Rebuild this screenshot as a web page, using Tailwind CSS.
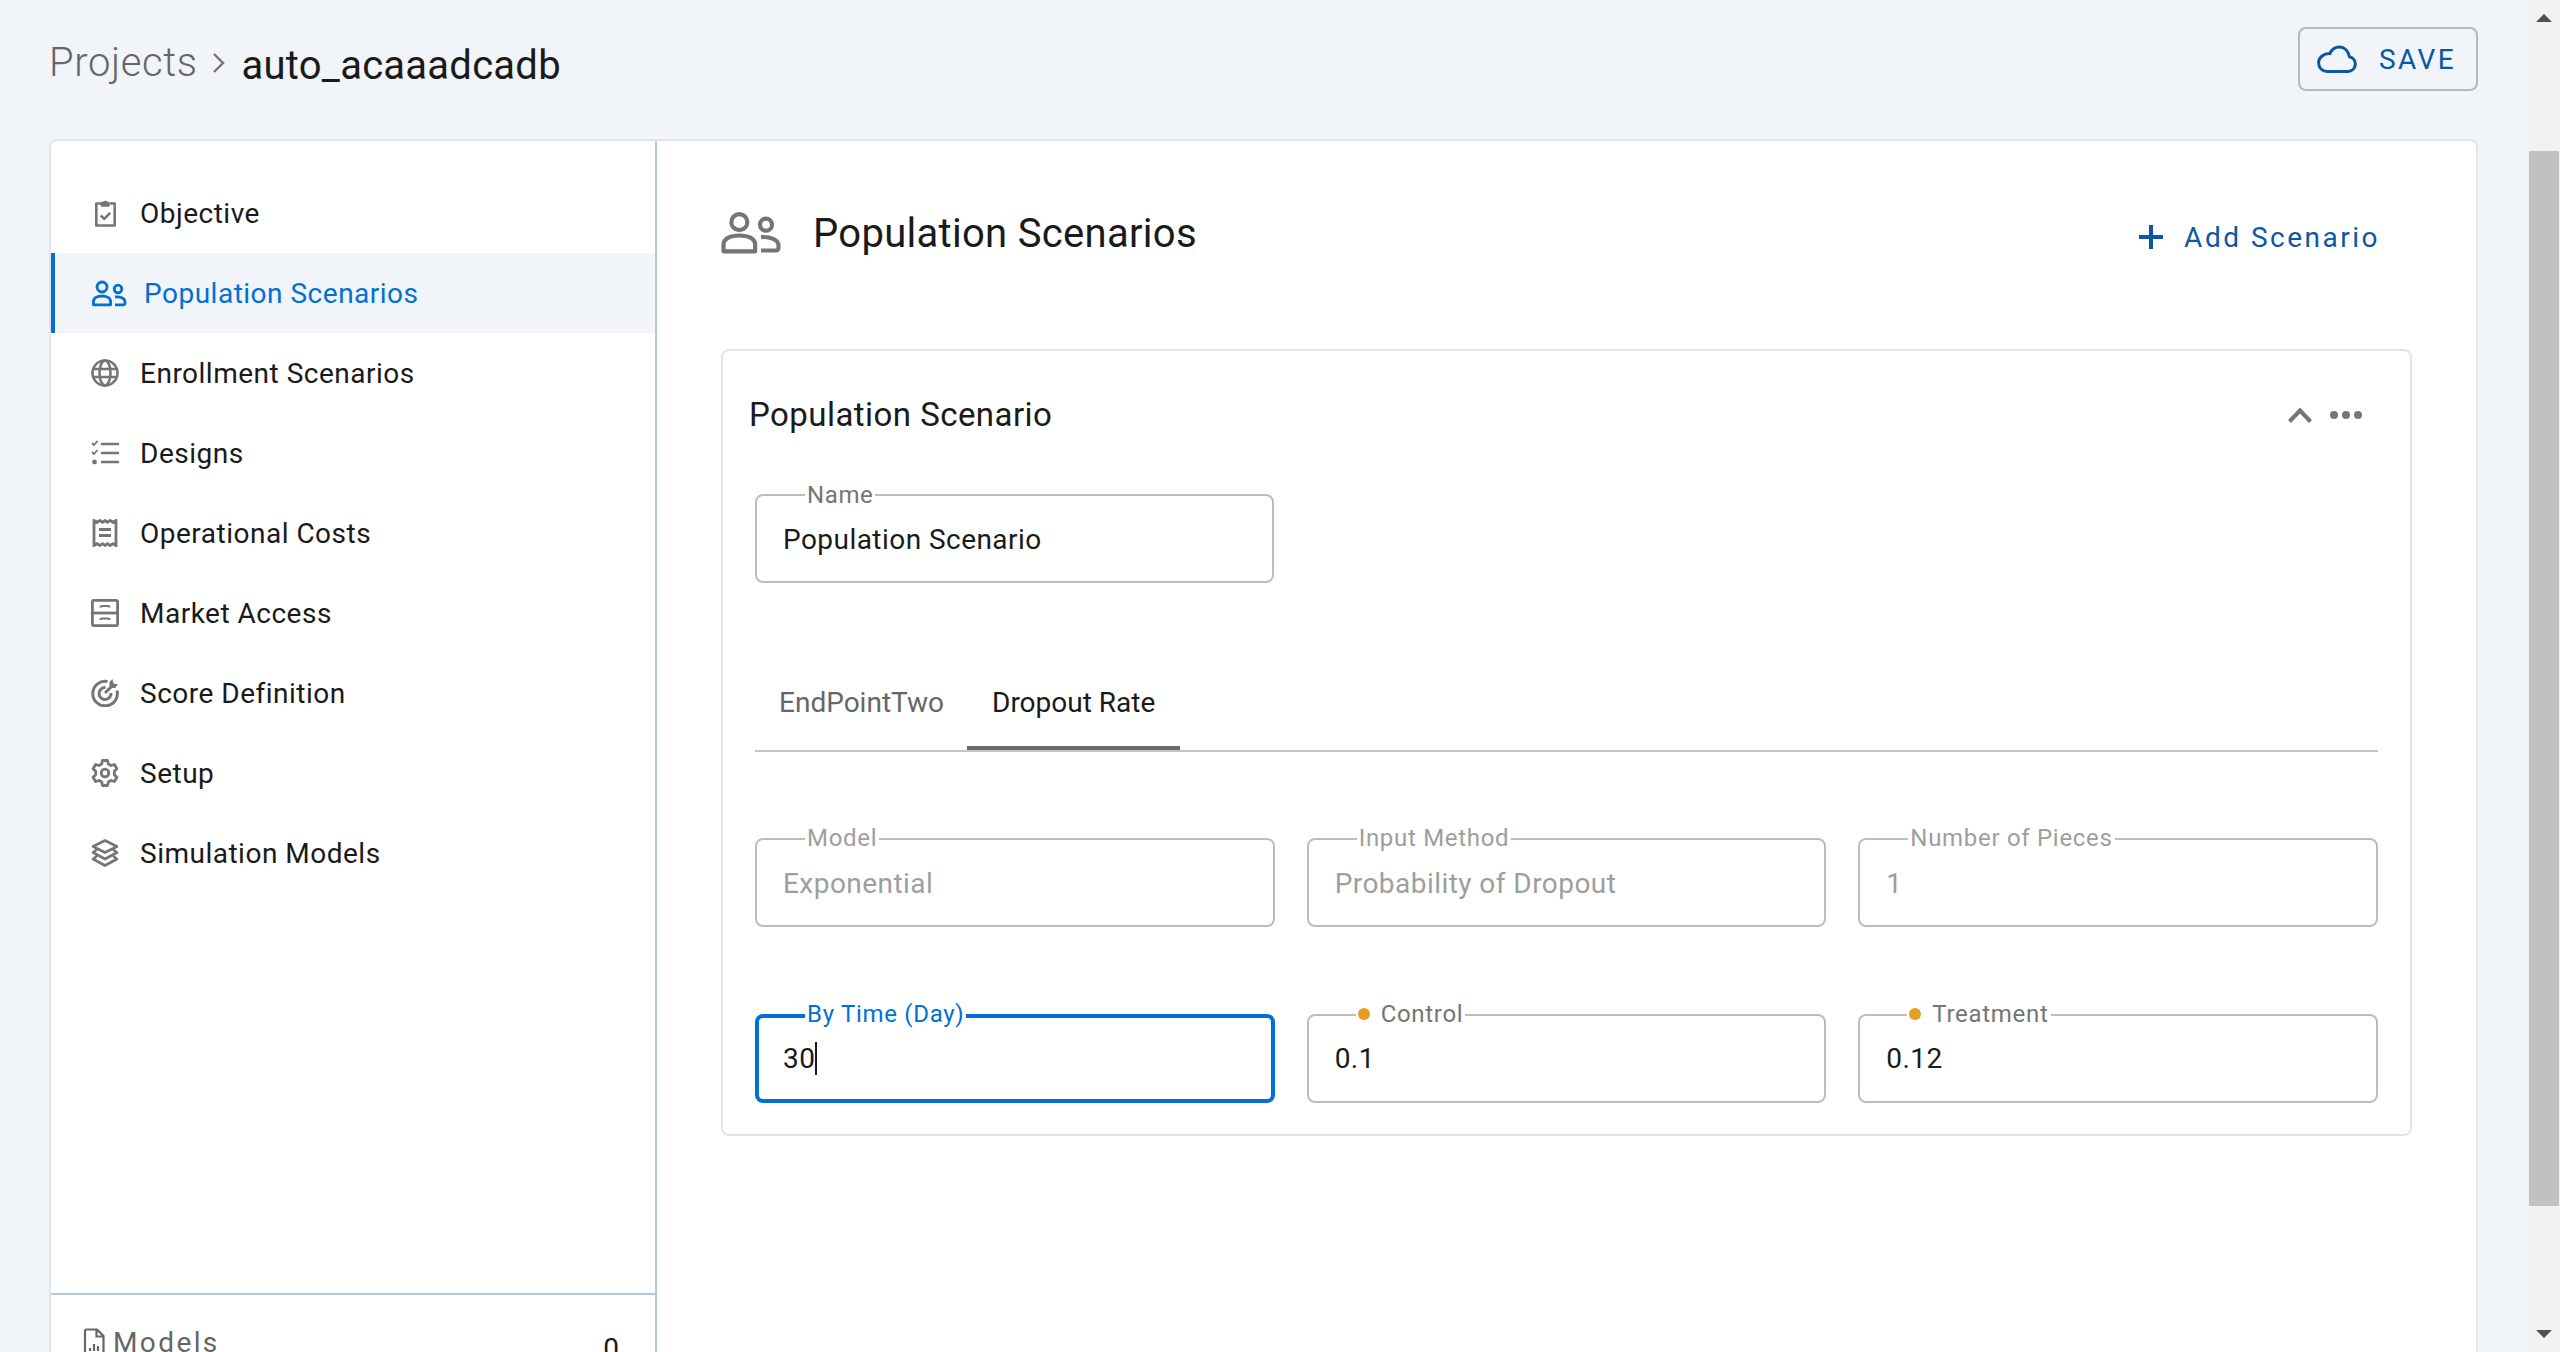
<!DOCTYPE html>
<html lang="en">
<head>
  <meta charset="UTF-8" />
  <title>Population Scenarios</title>
  <script src="https://cdn.jsdelivr.net/npm/@tailwindcss/browser@4"></script>
</head>
<body class="h-[1352px] overflow-hidden flex bg-[#f1f4f8] font-['Roboto',sans-serif] text-[#1a1a1a]">

  <div class="flex-1 min-w-0 pl-[49px] pr-[49px]">
    <!-- header -->
    <header class="h-[139px] flex items-start justify-between">
      <div class="flex items-center h-[70px] mt-[27px]">
        <span class="text-[40px] pt-[2px] font-light text-[#666666] tracking-[0.6px]">Projects</span>
        <svg class="w-[14px] h-[22px] ml-[14px] mr-[16px] mt-[2px]" viewBox="0 0 14 22" fill="none" stroke="#757575" stroke-width="2.4"><path d="M2 2l9 9-9 9"/></svg>
        <span class="text-[40px] mt-[8px] tracking-[0.25px]">auto_acaaadcadb</span>
      </div>
      <button class="mt-[27px] w-[180px] h-[64px] border-2 border-[#b5b9bd] rounded-lg flex items-center pl-[17px] text-[#0b57a4]">
        <svg class="w-[40px] h-[28px]" viewBox="0 0 40 28" fill="none" stroke="#0b57a4" stroke-width="3"><path d="M10 26.500h21a7.500 7.500 0 0 0 1.500-14.800C31.500 6 27.500 2 22.500 2c-4.600 0-8 2.600-9.600 6.600C7 8.400 1.600 12.200 1.600 17.800c0 5 3.800 8.700 8.400 8.700z"/></svg>
        <span class="ml-[22px] pt-[2px] text-[28px] tracking-[2.4px]">SAVE</span>
      </button>
    </header>

    <!-- main card -->
    <div class="flex h-[1400px] bg-white border-2 border-[#e4e4e4] rounded-lg">
      <aside class="w-[606px] shrink-0 border-r-2 border-[#b0c8e0]">
        <nav class="h-[1152px] pt-[32px] text-[28px] tracking-[0.5px]">
          <a class="h-[80px] flex items-center pl-[40px] pt-[2px]">
            <svg class="w-[28px] h-[28px] mr-[21px] -mt-[2px] text-[#757575]" viewBox="0 0 28 28" fill="none" stroke="currentColor" stroke-width="2.600" stroke-linejoin="round"><path d="M10 4.500H5.300v22h18.400v-22H19"/><path d="M10.500 3.500h2a2 2 0 0 1 3.500 0h2v3.500h-7.500z" fill="currentColor" stroke-width="1.400"/><path d="M9.800 16.500l3.400 3.400 6-6"/></svg>
            Objective
          </a>
          <a class="h-[80px] flex items-center pl-[36px] pt-[2px] bg-[#f1f4f8] border-l-4 border-[#0070d6] text-[#0070d6]">
            <svg class="w-[36px] h-[28px] mr-[17px] -mt-[2px]" viewBox="0 0 36 28" fill="none" stroke="currentColor" stroke-width="2.800" stroke-linejoin="round"><circle cx="11" cy="8" r="5"/><circle cx="27" cy="10" r="3.800"/><path d="M2.400 25.800v-3c0-3.800 4-5.800 8.600-5.800s8.600 2 8.600 5.800v3z"/><path d="M24 18c5-.5 10 1 10 5v1.300a1.500 1.500 0 0 1-1.500 1.500H24"/></svg>
            Population Scenarios
          </a>
          <a class="h-[80px] flex items-center pl-[40px] pt-[2px]">
            <svg class="w-[28px] h-[28px] mr-[21px] -mt-[2px] text-[#757575]" viewBox="0 0 28 28" fill="none" stroke="currentColor" stroke-width="2.600"><circle cx="14" cy="14" r="12.500"/><ellipse cx="14" cy="14" rx="5.500" ry="12.500"/><path d="M2 10h24M2 18h24"/></svg>
            Enrollment Scenarios
          </a>
          <a class="h-[80px] flex items-center pl-[40px] pt-[2px]">
            <svg class="w-[28px] h-[28px] mr-[21px] -mt-[2px] text-[#757575]" viewBox="0 0 28 28" fill="none" stroke="currentColor" stroke-width="2.600"><path d="M10 5h18M10 14h18M10 23h18"/><path d="M1 4l2 2 3.500-4M1 13l2 2 3.500-4" stroke-width="1.800"/><circle cx="3.500" cy="23" r="2.400" fill="currentColor" stroke="none"/></svg>
            Designs
          </a>
          <a class="h-[80px] flex items-center pl-[40px] pt-[2px]">
            <svg class="w-[28px] h-[28px] mr-[21px] -mt-[2px] text-[#757575]" viewBox="0 0 28 28" fill="none" stroke="currentColor" stroke-width="2.800"><path d="M3 1.500v25l3-1.800 3 1.800 2.500-1.800L14 26.500l2.500-1.800 2.500 1.800 3-1.800 3 1.800v-25l-3 1.800-3-1.800-2.500 1.800L14 1.500l-2.500 1.800L9 1.500 6 3.300z"/><path d="M8 10.500h12M8 16.500h12"/></svg>
            Operational Costs
          </a>
          <a class="h-[80px] flex items-center pl-[40px] pt-[2px]">
            <svg class="w-[28px] h-[28px] mr-[21px] -mt-[2px] text-[#757575]" viewBox="0 0 28 28" fill="none" stroke="currentColor" stroke-width="2.800"><rect x="1.400" y="1.400" width="25.200" height="25.200" rx="1.500"/><path d="M1 14h26"/><path d="M9.500 8.500c0-1 .5-1.500 1.500-1.500h6c1 0 1.500.5 1.500 1.500M9.500 21c0-1 .5-1.500 1.500-1.500h6c1 0 1.500.5 1.500 1.500" stroke-width="2.200"/></svg>
            Market Access
          </a>
          <a class="h-[80px] flex items-center pl-[40px] pt-[2px]">
            <svg class="w-[28px] h-[28px] mr-[21px] -mt-[2px] text-[#757575]" viewBox="0 0 28 28" fill="none" stroke="currentColor" stroke-width="3"><path d="M16.500 2.500A12.300 12.300 0 1 0 26 11.500"/><path d="M14.500 8.500A6 6 0 1 0 20 14"/><path d="M14 14l7-7"/><path d="M18.500 7.500V3l3-3 1 4.500 4.500 1-3 3.500h-4z" fill="currentColor" stroke="none"/></svg>
            Score Definition
          </a>
          <a class="h-[80px] flex items-center pl-[40px] pt-[2px]">
            <svg class="w-[28px] h-[28px] mr-[21px] -mt-[2px] text-[#757575]" viewBox="0 0 28 28" fill="none" stroke="currentColor" stroke-width="2.800" stroke-linejoin="round"><path d="M11.500 1.500h5l.8 3.500 2.700 1.500 3.400-1 2.500 4.300-2.600 2.500v3.400l2.600 2.500-2.500 4.300-3.400-1-2.700 1.500-.8 3.500h-5l-.8-3.500L8 21.500l-3.400 1L2.100 18.200l2.600-2.500v-3.400L2.100 9.800l2.500-4.300 3.400 1 2.700-1.500z"/><circle cx="14" cy="14" r="3.800"/></svg>
            Setup
          </a>
          <a class="h-[80px] flex items-center pl-[40px] pt-[2px]">
            <svg class="w-[28px] h-[28px] mr-[21px] -mt-[2px] text-[#757575]" viewBox="0 0 28 28" fill="none" stroke="currentColor" stroke-width="2.600" stroke-linejoin="round"><path d="M14 1.500l12 6-12 6-12-6z"/><path d="M6 10.500l-4 3 12 6.500 12-6.500-4-3"/><path d="M6 17l-4 3 12 6.500 12-6.500-4-3"/></svg>
            Simulation Models
          </a>
        </nav>
        <div class="border-t-2 border-[#b0c8e0] flex items-start pl-[32px] pr-[36px] pt-[34px]">
          <svg class="w-[22px] h-[28px] -mt-[1px] text-[#666666]" viewBox="0 0 22 28" fill="none" stroke="currentColor" stroke-width="2.200"><path d="M2 26.500V3a1.500 1.500 0 0 1 1.500-1.500H14L20.500 8v18.500z"/><path d="M13.500 2v6.500h7"/><path d="M7 23v-3M11 23v-7M15 23v-5"/></svg>
          <span class="ml-[8px] text-[28px] leading-[28px] tracking-[2.400px] text-[#666666]">Models</span>
          <span class="ml-auto mt-[6px] text-[28px] leading-[28px]">0</span>
        </div>
      </aside>

      <main class="flex-1 min-w-0 pt-[56px] pl-[64px] pr-[64px]">
        <div class="h-[72px] flex items-center justify-between pr-[32px]">
          <div class="flex items-center">
            <svg class="w-[60px] h-[42px] text-[#757575]" viewBox="0 0 36 25" fill="none" stroke="currentColor" stroke-width="2.500" stroke-linejoin="round"><circle cx="11" cy="6" r="4.800"/><circle cx="27" cy="7.500" r="3.600"/><path d="M1.500 23.500V19.500c0-3.500 3.800-5.500 9.500-5.500s9.500 2 9.500 5.500v4z"/><path d="M24 15c5.500-.5 10.500 1.500 10.500 5v1.500a1.500 1.500 0 0 1-1.500 1.500h-9"/></svg>
            <h1 class="ml-[32px] pt-[2px] text-[40px] tracking-[0.3px]">Population Scenarios</h1>
          </div>
          <button class="flex items-center mt-[8px] text-[#0b57a4] text-[28px] tracking-[2.5px]">
            <svg class="w-[24px] h-[24px] mr-[21px]" viewBox="0 0 24 24" fill="none" stroke="#0b57a4" stroke-width="4"><path d="M12 0v24M0 12h24"/></svg>
            <span class="pt-[2px]">Add Scenario</span>
          </button>
        </div>

        <section class="mt-[80px] h-[787px] border-2 border-[#e4e4e4] rounded-lg pl-[32px] pr-[32px] pt-[29px]">
          <div class="h-[70px] flex items-center justify-between -ml-[6px] pr-[16px]">
            <h2 class="text-[33px] tracking-[0.45px]">Population Scenario</h2>
            <div class="flex items-center">
              <svg class="w-[24px] h-[16px] mr-[18px]" viewBox="0 0 24 16" fill="none" stroke="#757575" stroke-width="4"><path d="M1.500 14.500L12 3.500l10.500 11"/></svg>
              <svg class="w-[32px] h-[8px]" viewBox="0 0 32 8" fill="#757575"><circle cx="4" cy="4" r="4"/><circle cx="16" cy="4" r="4"/><circle cx="28" cy="4" r="4"/></svg>
            </div>
          </div>

          <div class="mt-[44px] relative w-[519px] h-[89px] border-2 border-[#bdbdbd] rounded-lg flex items-center pl-[26px] pt-[3px] text-[28px] tracking-[0.45px]">
            Population Scenario
            <span class="absolute -top-[15px] left-[48px] bg-white px-[2px] text-[24px] leading-[28px] text-[#757575] tracking-[0.6px]">Name</span>
          </div>

          <div class="mt-[73px] flex border-b-2 border-[#c4c4c4] text-[28px]">
            <div class="h-[94px] flex items-center pl-[24px] pr-[23px] text-[#666666]">EndPointTwo</div>
            <div class="h-[94px] flex items-center px-[25px] border-b-4 border-[#6b6b6b] pt-[4px]">Dropout Rate</div>
          </div>

          <div class="mt-[86px] grid grid-cols-3 gap-x-[32px] gap-y-[87px] text-[28px] tracking-[0.45px]">
            <div class="relative h-[89px] border-2 border-[#bdbdbd] rounded-lg flex items-center pl-[26px] pt-[3px] text-[#9e9e9e]">
              Exponential
              <span class="absolute -top-[16px] left-[48px] bg-white px-[2px] text-[24px] leading-[28px] tracking-[0.7px]">Model</span>
            </div>
            <div class="relative h-[89px] border-2 border-[#bdbdbd] rounded-lg flex items-center pl-[26px] pt-[3px] text-[#9e9e9e]">
              Probability of Dropout
              <span class="absolute -top-[16px] left-[48px] bg-white px-[2px] text-[24px] leading-[28px] tracking-[0.7px]">Input Method</span>
            </div>
            <div class="relative h-[89px] border-2 border-[#bdbdbd] rounded-lg flex items-center pl-[26px] pt-[3px] text-[#9e9e9e]">
              1
              <span class="absolute -top-[16px] left-[48px] bg-white px-[2px] text-[24px] leading-[28px] tracking-[0.7px]">Number of Pieces</span>
            </div>

            <div class="relative h-[89px] border-4 border-[#0070d6] rounded-lg flex items-center pl-[24px]">
              <span>30</span><span class="w-[2px] h-[33px] bg-[#1a1a1a]"></span>
              <span class="absolute -top-[18px] left-[46px] bg-white px-[2px] text-[24px] leading-[28px] text-[#0070d6] tracking-[0.7px]">By Time (Day)</span>
            </div>
            <div class="relative h-[89px] border-2 border-[#bdbdbd] rounded-lg flex items-center pl-[26px]">
              0.1
              <span class="absolute -top-[16px] left-[47px] bg-white px-[2px] flex items-center text-[24px] leading-[28px] text-[#757575] tracking-[0.7px]"><i class="w-[12px] h-[12px] rounded-full bg-[#e59e20] mr-[11px]"></i>Control</span>
            </div>
            <div class="relative h-[89px] border-2 border-[#bdbdbd] rounded-lg flex items-center pl-[26px]">
              0.12
              <span class="absolute -top-[16px] left-[47px] bg-white px-[2px] flex items-center text-[24px] leading-[28px] text-[#757575] tracking-[0.7px]"><i class="w-[12px] h-[12px] rounded-full bg-[#e59e20] mr-[11px]"></i>Treatment</span>
            </div>
          </div>
        </section>
      </main>
    </div>
  </div>

  <!-- scrollbar -->
  <div class="w-[33px] shrink-0 h-full bg-[#f1f1f1] flex flex-col items-center">
    <svg class="mt-[14px] w-[16px] h-[8px] shrink-0" viewBox="0 0 16 8" fill="#505050"><path d="M8 0l8 8H0z"/></svg>
    <div class="mt-[129px] w-[30px] h-[1055px] bg-[#c1c1c1] shrink-0"></div>
    <svg class="mt-[124px] w-[16px] h-[8px] shrink-0" viewBox="0 0 16 8" fill="#505050"><path d="M8 8L0 0h16z"/></svg>
  </div>

</body>
</html>
